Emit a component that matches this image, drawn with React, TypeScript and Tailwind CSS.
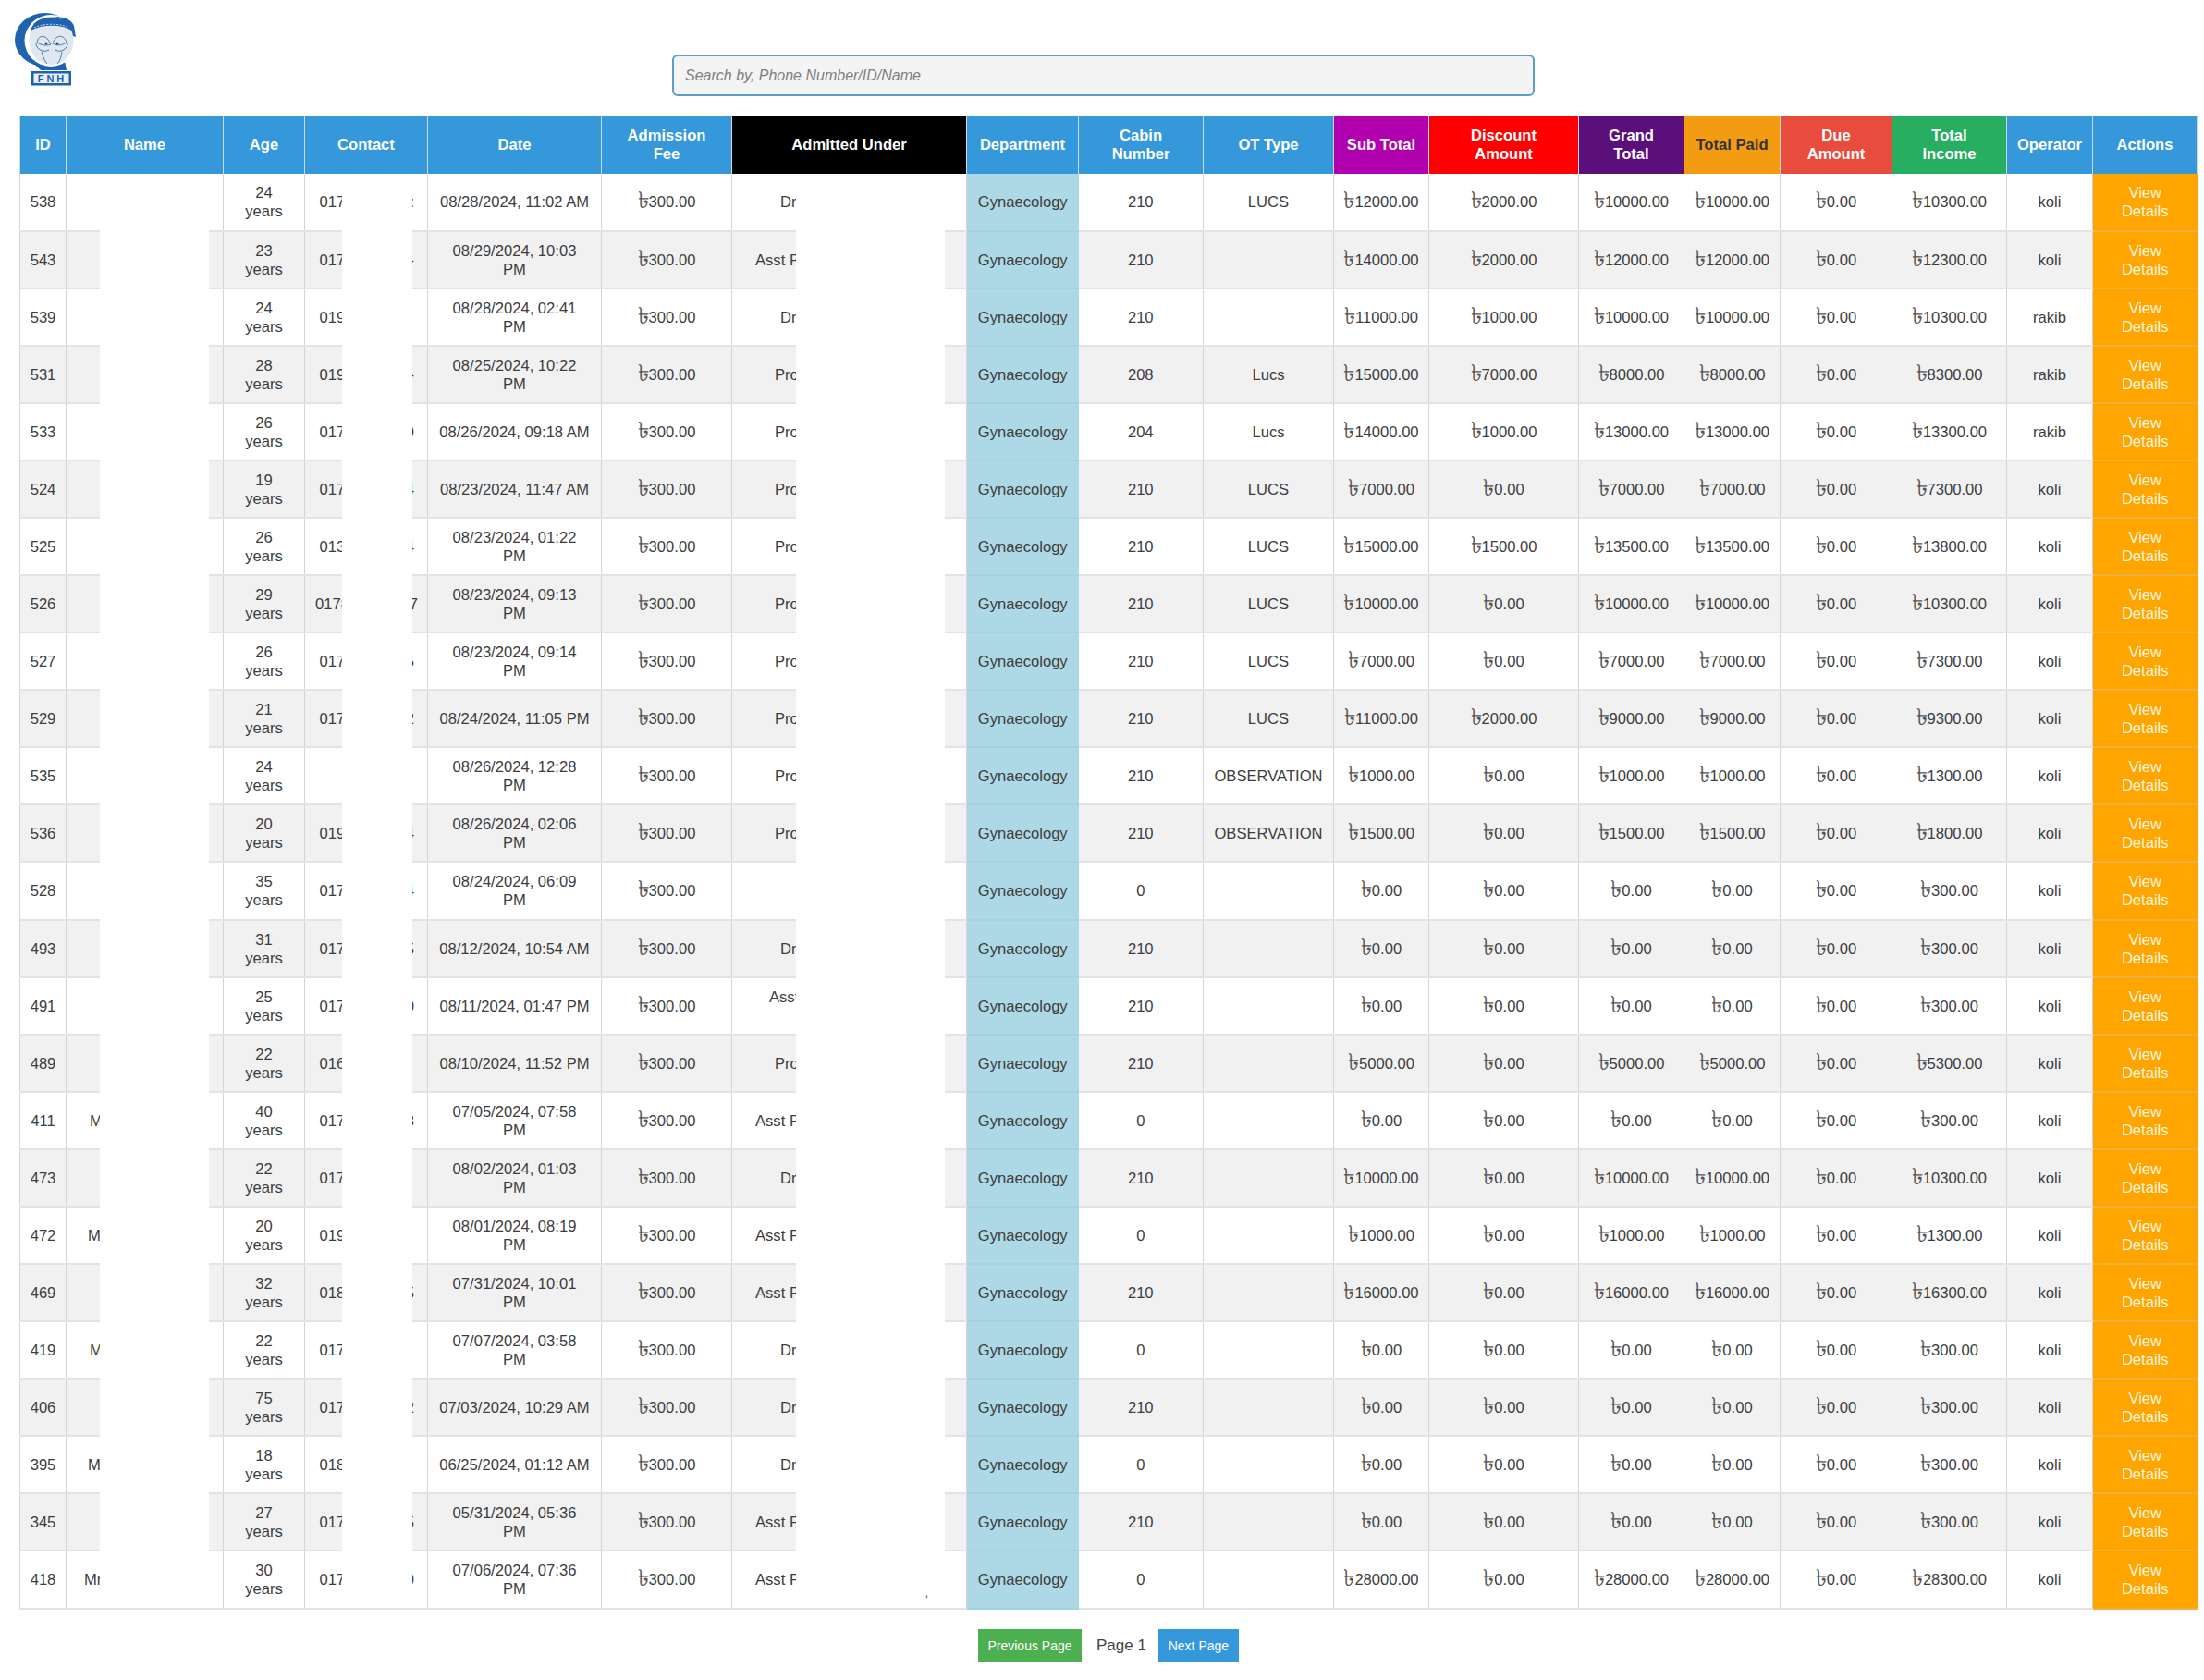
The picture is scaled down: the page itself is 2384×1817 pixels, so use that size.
import React from "react";

type Row = {
  id: number;
  name?: string;
  namePad?: string;
  age: number;
  phone: string;
  tail: string;
  date: string;
  under: string;
  cabin: number;
  ot: string;
  sub: number;
  disc: number;
  grand: number;
  paid: number;
  income: number;
  op: string;
};

const mk = (
  id: number,
  age: number,
  phone: string,
  tail: string,
  date: string,
  under: string,
  cabin: number,
  ot: string,
  sub: number,
  disc: number,
  grand: number,
  paid: number,
  income: number,
  op = "koli",
  name = "",
  namePad = ""
): Row => ({ id, age, phone, tail, date, under, cabin, ot, sub, disc, grand, paid, income, op, name, namePad });

const rows: Row[] = [
  mk(538, 24, "017", ":", "08/28/2024, 11:02 AM", "Dr.", 210, "LUCS", 12000, 2000, 10000, 10000, 10300),
  mk(543, 23, "017", "-", "08/29/2024, 10:03\nPM", "Asst P", 210, "", 14000, 2000, 12000, 12000, 12300),
  mk(539, 24, "019", "", "08/28/2024, 02:41\nPM", "Dr.", 210, "", 11000, 1000, 10000, 10000, 10300, "rakib"),
  mk(531, 28, "019", "-", "08/25/2024, 10:22\nPM", "Pro", 208, "Lucs", 15000, 7000, 8000, 8000, 8300, "rakib"),
  mk(533, 26, "017", "9", "08/26/2024, 09:18 AM", "Pro", 204, "Lucs", 14000, 1000, 13000, 13000, 13300, "rakib"),
  mk(524, 19, "017", "4", "08/23/2024, 11:47 AM", "Pro", 210, "LUCS", 7000, 0, 7000, 7000, 7300),
  mk(525, 26, "013", "4", "08/23/2024, 01:22\nPM", "Pro", 210, "LUCS", 15000, 1500, 13500, 13500, 13800),
  mk(526, 29, "0178", "7", "08/23/2024, 09:13\nPM", "Pro", 210, "LUCS", 10000, 0, 10000, 10000, 10300),
  mk(527, 26, "017", "5", "08/23/2024, 09:14\nPM", "Pro", 210, "LUCS", 7000, 0, 7000, 7000, 7300),
  mk(529, 21, "017", "2", "08/24/2024, 11:05 PM", "Pro", 210, "LUCS", 11000, 2000, 9000, 9000, 9300),
  mk(535, 24, "", "", "08/26/2024, 12:28\nPM", "Pro", 210, "OBSERVATION", 1000, 0, 1000, 1000, 1300),
  mk(536, 20, "019", "4", "08/26/2024, 02:06\nPM", "Pro", 210, "OBSERVATION", 1500, 0, 1500, 1500, 1800),
  mk(528, 35, "017", "4", "08/24/2024, 06:09\nPM", "", 0, "", 0, 0, 0, 0, 300),
  mk(493, 31, "017", "5", "08/12/2024, 10:54 AM", "Dr.", 210, "", 0, 0, 0, 0, 300),
  mk(491, 25, "017", "0", "08/11/2024, 01:47 PM", "Asst\n\u00a0", 210, "", 0, 0, 0, 0, 300),
  mk(489, 22, "016", "", "08/10/2024, 11:52 PM", "Pro", 210, "", 5000, 0, 5000, 5000, 5300),
  mk(411, 40, "017", "3", "07/05/2024, 07:58\nPM", "Asst P", 0, "", 0, 0, 0, 0, 300, "koli", "Md", "pl-[25px]"),
  mk(473, 22, "017", "", "08/02/2024, 01:03\nPM", "Dr.", 210, "", 10000, 0, 10000, 10000, 10300),
  mk(472, 20, "019", "", "08/01/2024, 08:19\nPM", "Asst P", 0, "", 1000, 0, 1000, 1000, 1300, "koli", "Md", "pl-[23px]"),
  mk(469, 32, "018", "5", "07/31/2024, 10:01\nPM", "Asst P", 210, "", 16000, 0, 16000, 16000, 16300),
  mk(419, 22, "017", "", "07/07/2024, 03:58\nPM", "Dr.", 0, "", 0, 0, 0, 0, 300, "koli", "Md", "pl-[25px]"),
  mk(406, 75, "017", "2", "07/03/2024, 10:29 AM", "Dr.", 210, "", 0, 0, 0, 0, 300),
  mk(395, 18, "018", "", "06/25/2024, 01:12 AM", "Dr.", 0, "", 0, 0, 0, 0, 300, "koli", "Md", "pl-[23px]"),
  mk(345, 27, "017", "5", "05/31/2024, 05:36\nPM", "Asst P", 210, "", 0, 0, 0, 0, 300),
  mk(418, 30, "017", "0", "07/06/2024, 07:36\nPM", "Asst P", 0, "", 28000, 0, 28000, 28000, 28300, "koli", "Mrs", "pl-[19px]"),
];

const underPad = (u: string) => {
  if (u === "Dr.") return "pl-[52px]";
  if (u === "Pro") return "pl-[46px]";
  if (u === "Asst P") return "pl-[25px]";
  return "pl-[40px]";
};

const headers = [
  { label: "ID", cls: "w-[50px] bg-[#3498db] text-white" },
  { label: "Name", cls: "w-[170px] bg-[#3498db] text-white" },
  { label: "Age", cls: "w-[88px] bg-[#3498db] text-white" },
  { label: "Contact", cls: "w-[133px] bg-[#3498db] text-white" },
  { label: "Date", cls: "w-[188px] bg-[#3498db] text-white" },
  { label: "Admission\nFee", cls: "w-[141px] bg-[#3498db] text-white" },
  { label: "Admitted Under", cls: "w-[254px] bg-black text-white" },
  { label: "Department", cls: "w-[121px] bg-[#3498db] text-white" },
  { label: "Cabin\nNumber", cls: "w-[135px] bg-[#3498db] text-white" },
  { label: "OT Type", cls: "w-[141px] bg-[#3498db] text-white" },
  { label: "Sub Total", cls: "w-[103px] bg-[#b100ad] text-white" },
  { label: "Discount\nAmount", cls: "w-[162px] bg-[#ff0000] text-white" },
  { label: "Grand\nTotal", cls: "w-[114px] bg-[#5b0f7a] text-white" },
  { label: "Total Paid", cls: "w-[104px] bg-[#f39c12] text-[#333333]" },
  { label: "Due\nAmount", cls: "w-[121px] bg-[#e74c3c] text-white" },
  { label: "Total\nIncome", cls: "w-[124px] bg-[#27ae60] text-white" },
  { label: "Operator", cls: "w-[93px] bg-[#3498db] text-white" },
  { label: "Actions", cls: "w-[113px] bg-[#3498db] text-white" },
];

const Taka = ({ n }: { n: number }) => (
  <>
    <span className="text-[25px] leading-[0] font-light align-[-1px] text-[#555555]">৳</span>
    {n}.00
  </>
);

const td = "border-r border-b-2 border-r-[#d4d4d4] border-b-[#e3e3e3] text-center align-middle whitespace-pre pt-[2px]";

const Logo = () => (
  <svg viewBox="16 14 66 80" className="w-[66px] h-[80px]">
    {/* blue globe and neck */}
    <ellipse cx="48.5" cy="43" rx="32.5" ry="29" fill="#1f63b0" />
    <path d="M30 62 L44 76 L72 76 L70 66 Z" fill="#1f63b0" />
    {/* white crescent */}
    <ellipse cx="55" cy="44" rx="28.5" ry="28" fill="#ffffff" />
    <path d="M80 28 C76 16 50 14 36 26 L82 40 Z" fill="#1f63b0" />
    {/* face with blue cap */}
    <ellipse cx="55.5" cy="44" rx="24" ry="26" fill="#dfe7f1" />
    <path d="M33 33 C38 14 72 14 78 33 C66 26 46 26 33 33 Z" fill="#1f63b0" />
    <path d="M37 30 C46 25 66 25 74 30" fill="none" stroke="#c9d8ea" strokeWidth="1" strokeDasharray="2 1.5" />
    {/* eyes and mask lines */}
    <g fill="none" stroke="#41689c" strokeWidth="0.9">
      <path d="M40 46 C42 36 51 38 55 48 C50 50 45 49 40 46 Z" />
      <path d="M57 47 C60 38 69 36 72 46 C67 49 62 50 57 47 Z" />
      <path d="M39 46 C38 52 46 58 53 54" />
      <path d="M73 46 C74 52 66 58 60 54" />
      <path d="M45 56 C47 63 49 67 51 69" />
      <path d="M67 56 C66 63 64 67 62 69" />
    </g>
    <circle cx="50" cy="47" r="1.5" fill="#1f4f8f" />
    <circle cx="62" cy="47" r="1.5" fill="#1f4f8f" />
    {/* name plate */}
    <rect x="34" y="77" width="43" height="15.5" fill="#1f63b0" />
    <rect x="36.5" y="79.5" width="38" height="10.5" fill="#e9f0f8" />
    <text x="56.5" y="89" textAnchor="middle" fontSize="11" fontWeight="700" letterSpacing="3" fill="#1f63b0" fontFamily="Liberation Sans, sans-serif">
      FNH
    </text>
  </svg>
);

export default function App() {
  return (
    <div className="min-h-[1817px] bg-white text-[#3d3d3d] font-['Liberation_Sans',Arial,sans-serif] text-[16.6px] leading-[20px]">
      {/* top bar */}
      <div className="flex items-start h-[125.5px] pl-4 pt-3.5">
        <Logo />
        <input
          placeholder="Search by, Phone Number/ID/Name"
          className="ml-[645px] mt-[45px] w-[933px] h-[45px] px-3 rounded-md border-2 border-[#5b9fc9] bg-[#f4f4f4] text-[16px] italic placeholder:text-[#808080]"
        />
      </div>

      {/* table */}
      <div className="relative ml-[21px] w-[2356px]">
        <table className="table-fixed w-[2356px] h-[1615px] border-collapse border-l border-l-[#d4d4d4]">
          <colgroup>
            {headers.map((h) => (
              <col key={h.label} className={h.cls.split(" ")[0]} />
            ))}
          </colgroup>
          <thead>
            <tr className="h-[62px]">
              {headers.map((h) => (
                <th key={h.label} className={`${h.cls} font-bold text-center whitespace-pre border-r border-[#cfd8dc] p-0`}>
                  {h.label}
                </th>
              ))}
            </tr>
          </thead>
          <tbody>
            {rows.map((r, i) => (
              <tr key={r.id} className={`h-[62px] ${i % 2 === 1 ? "bg-[#f1f1f1]" : "bg-white"}`}>
                <td className={td}>{r.id}</td>
                <td className={`${td} !text-left overflow-hidden ${r.namePad}`}>{r.name}</td>
                <td className={td}>{`${r.age}\nyears`}</td>
                <td className={`${td} ${r.phone === "0178" ? "pl-[11px] pr-[10px]" : "pl-[15.5px] pr-[14px]"}`}>
                  <div className="flex justify-between">
                    <span>{r.phone}</span>
                    <span>{r.tail}</span>
                  </div>
                </td>
                <td className={td}>{r.date}</td>
                <td className={td}><Taka n={300} /></td>
                <td className={`${td} !text-left overflow-hidden ${underPad(r.under)}`}>{r.under}</td>
                <td className={`${td} !border-b-[#a5d2e2] !border-r-0 bg-[#add8e6]`}>Gynaecology</td>
                <td className={td}>{r.cabin}</td>
                <td className={td}>{r.ot}</td>
                <td className={td}><Taka n={r.sub} /></td>
                <td className={td}><Taka n={r.disc} /></td>
                <td className={td}><Taka n={r.grand} /></td>
                <td className={td}><Taka n={r.paid} /></td>
                <td className={td}><Taka n={0} /></td>
                <td className={td}><Taka n={r.income} /></td>
                <td className={td}>{r.op}</td>
                <td className={`${td} !border-r-0 !border-b-[#f0b040] bg-[#ffa500] text-[#fff6df]`}>{"View\nDetails"}</td>
              </tr>
            ))}
          </tbody>
        </table>

        {/* blanked out columns */}
        <div className="absolute top-[62px] bottom-[2px] left-[87px] w-[118px] bg-white" />
        <div className="absolute top-[62px] bottom-[2px] left-[349px] w-[76px] bg-white" />
        <div className="absolute top-[62px] bottom-[2px] left-[840px] w-[161px] bg-white">
          <span className="absolute right-[18px] bottom-[10px] text-[12px] leading-none">,</span>
        </div>
      </div>

      {/* pagination */}
      <div className="flex items-center mt-[21px] ml-[1058px] gap-[16px]">
        <button className="w-[112px] h-[36px] bg-[#4caf50] text-white text-[14px]">Previous Page</button>
        <span className="text-[17px] text-[#444444] -mr-[3px]">Page 1</span>
        <button className="w-[87px] h-[36px] bg-[#3498db] text-white text-[14px]">Next Page</button>
      </div>
    </div>
  );
}
